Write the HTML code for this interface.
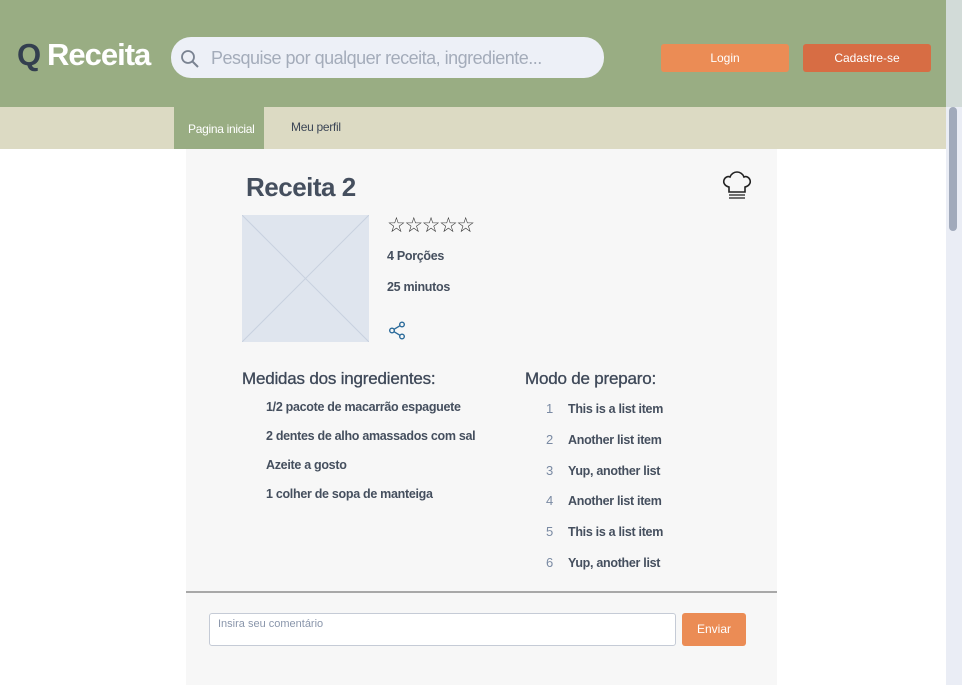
<!DOCTYPE html>
<html><head><meta charset="utf-8"><style>
*{margin:0;padding:0;box-sizing:border-box}
body{width:962px;height:685px;overflow:hidden;background:#fff;font-family:"Liberation Sans",sans-serif;position:relative;color:#454f5e}
.a{position:absolute;white-space:nowrap}
</style></head><body>
<div class="a" style="left:0;top:0;width:946px;height:107px;background:#99ad83"></div>
<div class="a" style="left:0;top:107px;width:946px;height:42px;background:#dcdac3"></div>
<div class="a" style="left:174px;top:107px;width:90px;height:42px;background:#99ad83"></div>
<div class="a" style="left:188px;top:122px;font-size:12px;color:#fff;letter-spacing:-0.3px">Pagina inicial</div>
<div class="a" style="left:291px;top:120px;font-size:12px;color:#3c4656;letter-spacing:-0.3px">Meu perfil</div>
<div class="a" style="left:17px;top:37px;font-size:31px;font-weight:bold;color:#333f4f">Q</div>
<div class="a" style="left:47px;top:37px;font-size:31px;font-weight:bold;color:#fff;letter-spacing:-1px">Receita</div>
<div class="a" style="left:171px;top:37px;width:433px;height:41px;background:#edf0f7;border-radius:20px"></div>
<svg class="a" style="left:180px;top:49px" width="20" height="20" viewBox="0 0 20 20"><circle cx="8" cy="8" r="6" fill="none" stroke="#7a8392" stroke-width="1.8"/><path d="M12.5 12.5L18 18" stroke="#7a8392" stroke-width="2"/></svg>
<div class="a" style="left:211px;top:48px;font-size:18px;color:#a4acba;letter-spacing:-0.5px">Pesquise por qualquer receita, ingrediente...</div>
<div class="a" style="left:661px;top:44px;width:128px;height:28px;background:#eb8c55;border-radius:3px;color:#fff;font-size:12px;text-align:center;line-height:28px">Login</div>
<div class="a" style="left:803px;top:44px;width:128px;height:28px;background:#d76d44;border-radius:3px;color:#fff;font-size:12px;text-align:center;line-height:28px">Cadastre-se</div>
<div class="a" style="left:946px;top:0;width:16px;height:107px;background:#d2dbd8"></div>
<div class="a" style="left:946px;top:107px;width:16px;height:578px;background:#eaedf5"></div>
<div class="a" style="left:949px;top:107px;width:8px;height:124px;background:#a1aabb;border-radius:4px"></div>
<div class="a" style="left:186px;top:149px;width:591px;height:536px;background:#f7f7f7"></div>
<div class="a" style="left:186px;top:591px;width:591px;height:2px;background:#a8a8a8"></div>
<div class="a" style="left:246px;top:172px;font-size:26px;font-weight:bold;color:#454f5e;letter-spacing:-0.5px">Receita 2</div>
<svg class="a" style="left:722px;top:171px" width="30" height="32" viewBox="0 0 30 32"><path d="M7 21V16C3 15 1 12 2 9C3 6 6 5 8 6C9 3 12 1 15 1C18 1 21 3 22 6C24 5 27 6 28 9C29 12 27 15 23 16V21Z" fill="none" stroke="#222" stroke-width="1.6"/><path d="M7 24H23M7 27H23" stroke="#444" stroke-width="1.4"/></svg>
<svg class="a" style="left:242px;top:215px" width="127" height="127"><rect width="127" height="127" fill="#dfe5ee"/><path d="M0 0L127 127M127 0L0 127" stroke="#c8d1df" stroke-width="1"/></svg>
<div class="a" style="left:387px;top:213px;font-size:21px;color:#333;letter-spacing:-1.5px">☆☆☆☆☆</div>
<div class="a" style="left:387px;top:249px;font-size:12.5px;font-weight:bold;letter-spacing:-0.3px">4 Porções</div>
<div class="a" style="left:387px;top:280px;font-size:12.5px;font-weight:bold;letter-spacing:-0.3px">25 minutos</div>
<svg class="a" style="left:388px;top:321px" width="18" height="19" viewBox="0 0 18 19"><circle cx="14" cy="3.5" r="2.3" fill="none" stroke="#2a6a9a" stroke-width="1.4"/><circle cx="4" cy="9.5" r="2.3" fill="none" stroke="#2a6a9a" stroke-width="1.4"/><circle cx="14" cy="15.5" r="2.3" fill="none" stroke="#2a6a9a" stroke-width="1.4"/><path d="M6 8.3L12 4.7M6 10.7L12 14.3" stroke="#2a6a9a" stroke-width="1.4"/></svg>
<div class="a" style="left:242px;top:369px;font-size:17px;letter-spacing:-0.2px;color:#3e4858;-webkit-text-stroke:0.3px #3e4858">Medidas dos ingredientes:</div>
<div class="a" style="left:266px;top:393px;font-size:12.5px;font-weight:bold;line-height:29px;letter-spacing:-0.3px">1/2 pacote de macarrão espaguete<br>2 dentes de alho amassados com sal<br>Azeite a gosto<br>1 colher de sopa de manteiga</div>
<div class="a" style="left:525px;top:369px;font-size:17px;letter-spacing:-0.2px;color:#3e4858;-webkit-text-stroke:0.3px #3e4858">Modo de preparo:</div>
<div class="a" style="left:546px;top:394px;font-size:13px;color:#7a8aa3;line-height:30.8px">1<br>2<br>3<br>4<br>5<br>6</div>
<div class="a" style="left:568px;top:394px;font-size:12.5px;font-weight:bold;line-height:30.8px;letter-spacing:-0.3px">This is a list item<br>Another list item<br>Yup, another list<br>Another list item<br>This is a list item<br>Yup, another list</div>
<div class="a" style="left:209px;top:613px;width:467px;height:33px;background:#fff;border:1px solid #c5cbd6;border-radius:3px"></div>
<div class="a" style="left:218px;top:618px;font-size:11px;color:#8a96ab">Insira seu comentário</div>
<div class="a" style="left:682px;top:613px;width:64px;height:33px;background:#eb8c55;border-radius:3px;color:#fff;font-size:12px;text-align:center;line-height:33px">Enviar</div>
</body></html>
